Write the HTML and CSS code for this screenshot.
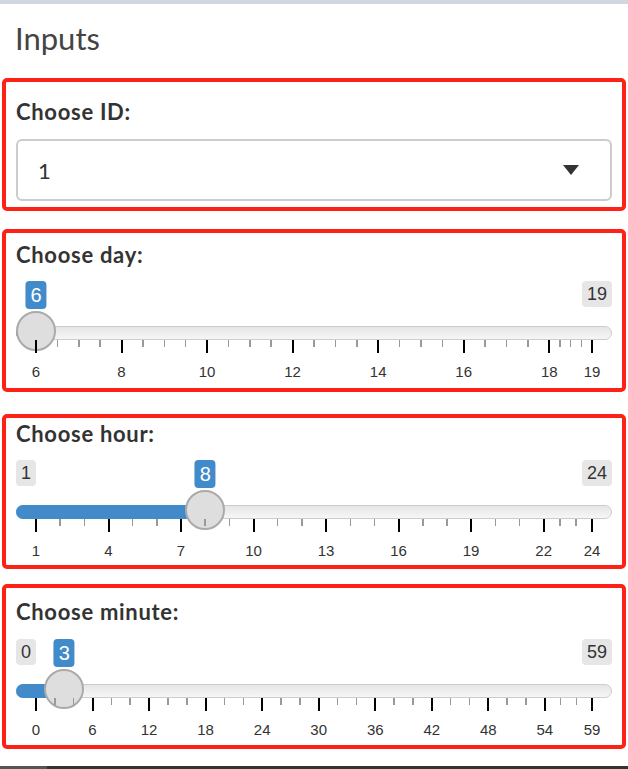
FILE: index.html
```html
<!DOCTYPE html>
<html>
<head>
<meta charset="utf-8">
<link rel="stylesheet" href="styles.css">
</head>
<body>
<div class="topbar"></div>
<div class="title">Inputs</div>

<div class="box box-id">
  <div class="label">Choose ID:</div>
  <div class="select">
    <span class="select-value">1</span>
    <span class="caret"></span>
  </div>
</div>

<div class="box box-day">
  <div class="label">Choose day:</div>
  <div class="slider" data-min="6" data-max="19" data-value="6" data-step="2" data-sub="3">
    <div class="irs-labels">
      <span class="irs-max">19</span>
      <span class="irs-single" style="left:20px">6</span>
    </div>
    <div class="irs-line">
      <div class="irs-bar" style="width:21px"></div>
      <div class="irs-handle" style="left:19px"></div>
    </div>
    <div class="irs-grid"></div>
  </div>
</div>

<div class="box box-hour">
  <div class="label">Choose hour:</div>
  <div class="slider" data-min="1" data-max="24" data-value="8" data-step="3" data-sub="2">
    <div class="irs-labels">
      <span class="irs-min">1</span>
      <span class="irs-max">24</span>
      <span class="irs-single" style="left:189.2px">8</span>
    </div>
    <div class="irs-line">
      <div class="irs-bar" style="width:190px"></div>
      <div class="irs-handle" style="left:188.2px"></div>
    </div>
    <div class="irs-grid"></div>
  </div>
</div>

<div class="box box-minute">
  <div class="label">Choose minute:</div>
  <div class="slider slider-minute" data-min="0" data-max="59" data-value="3" data-step="6" data-sub="2">
    <div class="irs-labels">
      <span class="irs-min">0</span>
      <span class="irs-max">59</span>
      <span class="irs-single" style="left:48.3px">3</span>
    </div>
    <div class="irs-line">
      <div class="irs-bar" style="width:49px"></div>
      <div class="irs-handle" style="left:47.3px"></div>
    </div>
    <div class="irs-grid"></div>
  </div>
</div>

<div class="footer"><div class="footer-left"></div></div>
<script src="script.js"></script>
</body>
</html>
```
FILE: styles.css
```css
html, body {
  margin: 0;
  padding: 0;
}
body {
  height: 769px;
  overflow: hidden;
  display: flex;
  flex-direction: column;
  background: #fff;
  font-family: Lato, "Noto Sans", sans-serif;
  color: #333;
}
.topbar {
  height: 4px;
  background: #d2d6de;
  flex: none;
}
.title {
  padding: 14px 0 0 15px;
  font-size: 31px;
  line-height: 40px;
  color: #444;
  font-weight: 400;
}
.box {
  margin: 0 2px;
  border: 4px solid #fe2116;
  border-radius: 5px;
  padding-left: 10px;
  padding-right: 10px;
}
.box-id {
  margin-top: 20px;
  padding-top: 15px;
  padding-bottom: 6px;
}
.box-day {
  margin-top: 18px;
  padding-top: 7px;
  padding-bottom: 6px;
}
.box-hour {
  margin-top: 22px;
  padding-top: 1px;
  padding-bottom: 4px;
}
.box-minute {
  margin-top: 15px;
  padding-top: 9px;
  padding-bottom: 5px;
}
.label {
  font-weight: 700;
  font-size: 22px;
  line-height: 30px;
  letter-spacing: 0.7px;
  color: #333;
}
.select {
  margin-top: 12px;
  height: 62px;
  box-sizing: border-box;
  border: 2px solid #cccccc;
  border-radius: 6px;
  display: flex;
  align-items: center;
  justify-content: space-between;
  padding: 0 31px 0 20px;
  font-size: 22px;
  color: #333;
}
.caret {
  width: 0;
  height: 0;
  border-left: 8px solid transparent;
  border-right: 8px solid transparent;
  border-top: 10px solid #333;
}
.slider {
  margin-top: 11px;
  position: relative;
  height: 101px;
  font-family: "Liberation Sans", Arial, sans-serif;
}
.slider-minute {
  margin-top: 12px;
}
.irs-labels {
  position: relative;
  height: 45px;
}
.irs-min, .irs-max, .irs-single {
  position: absolute;
  top: 0;
  height: 26px;
  line-height: 26px;
  padding: 0 5px;
  font-size: 18px;
  border-radius: 4px;
  background: #e6e6e6;
  color: #333;
}
.irs-min { left: 0; }
.irs-max { right: 0; }
.irs-single {
  height: 28px;
  line-height: 28px;
  font-size: 20px;
  padding: 0 5px;
  background: #428bca;
  color: #fff;
  transform: translateX(-50%);
}
.irs-line {
  position: relative;
  height: 14px;
  box-sizing: border-box;
  border: 1px solid #cccccc;
  border-radius: 7px;
  background: linear-gradient(to bottom, #dddddd -50%, #ffffff 150%);
}
.irs-bar {
  position: absolute;
  left: -1px;
  top: -1px;
  height: 14px;
  background: #428bca;
  border-radius: 7px 0 0 7px;
}
.irs-handle {
  position: absolute;
  top: -16px;
  width: 40px;
  height: 40px;
  box-sizing: border-box;
  border: 2px solid #aaaaaa;
  border-radius: 50%;
  background: #dedede;
  transform: translateX(-50%);
}
.irs-grid {
  position: relative;
  height: 42px;
}
.tick {
  position: absolute;
  top: 0;
  width: 2px;
  height: 13px;
  margin-left: -1px;
  background: #000;
}
.tick.small {
  width: 1.5px;
  margin-left: -0.75px;
  height: 7px;
  background: #999;
}
.tick-text {
  position: absolute;
  top: 23px;
  transform: translateX(-50%);
  font-size: 15px;
  line-height: 18px;
  color: #333;
  white-space: nowrap;
}
.footer {
  margin-top: auto;
  height: 3px;
  background: #333;
  flex: none;
}
.footer-left {
  width: 47px;
  height: 3px;
  background: #555;
}
```
FILE: script.js
```js
document.querySelectorAll('.slider').forEach(function (s) {
  var min = +s.dataset.min, max = +s.dataset.max;
  var step = +s.dataset.step, sub = +s.dataset.sub;
  var grid = s.querySelector('.irs-grid');
  function pos(v) { return 20 + 556 * (v - min) / (max - min); }
  var majors = [];
  for (var v = min; v < max; v += step) majors.push(v);
  majors.push(max);
  majors.forEach(function (m, i) {
    var t = document.createElement('span');
    t.className = 'tick';
    t.style.left = pos(m) + 'px';
    grid.appendChild(t);
    var tx = document.createElement('span');
    tx.className = 'tick-text';
    tx.style.left = pos(m) + 'px';
    tx.textContent = m;
    grid.appendChild(tx);
    if (i < majors.length - 1) {
      var a = pos(m), b = pos(majors[i + 1]);
      for (var k = 1; k <= sub; k++) {
        var st = document.createElement('span');
        st.className = 'tick small';
        st.style.left = (a + (b - a) * k / (sub + 1)) + 'px';
        grid.appendChild(st);
      }
    }
  });
});
```
